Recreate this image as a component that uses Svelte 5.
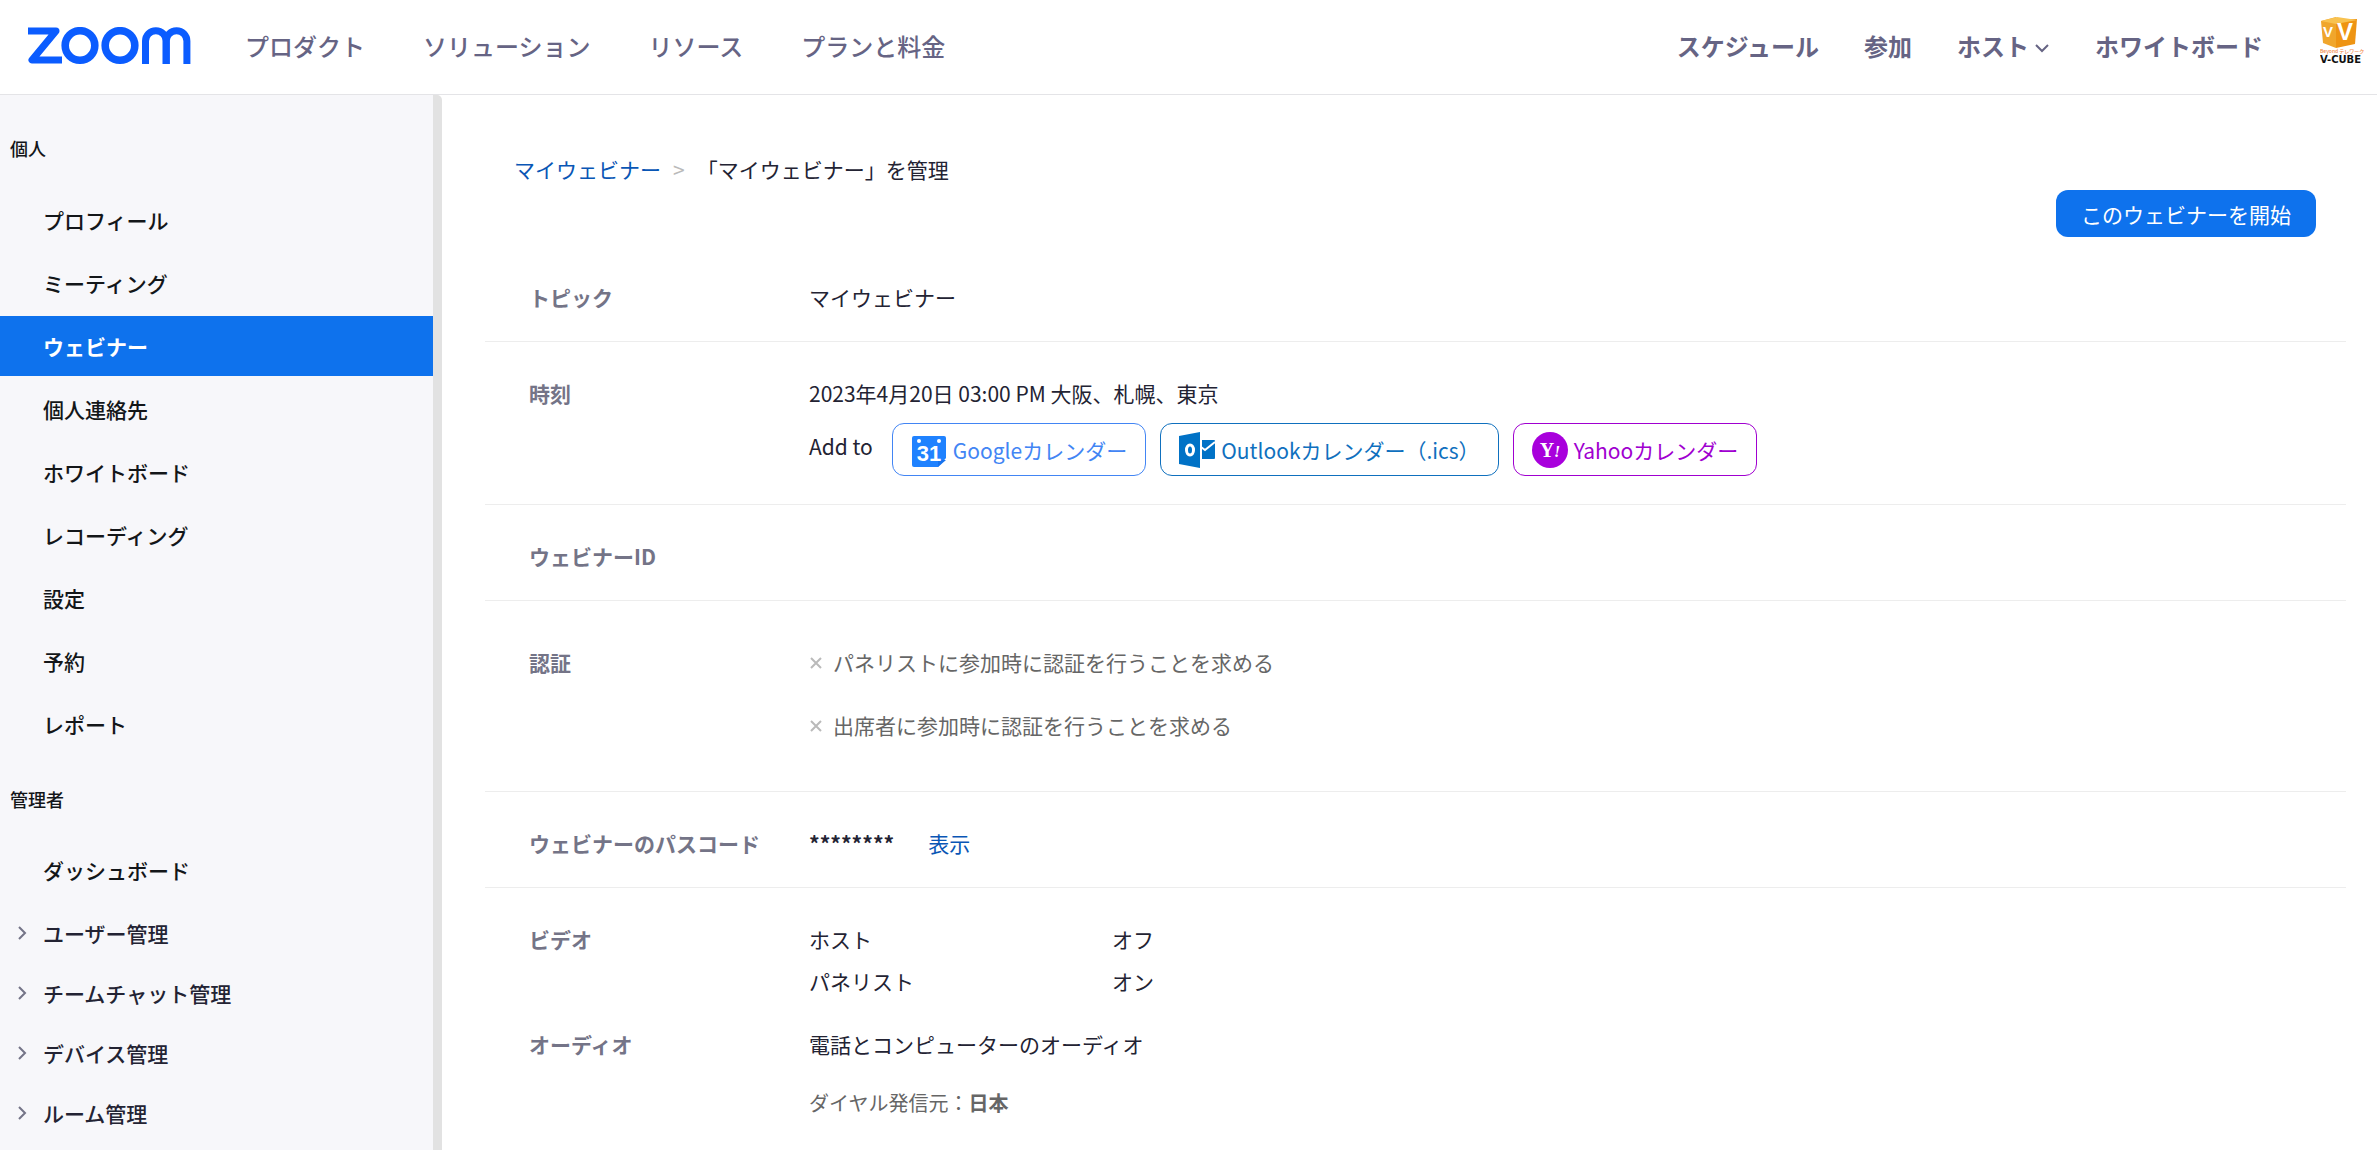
<script lang="ts">
  const products = ["プロダクト", "ソリューション", "リソース", "プランと料金"];

  const personal = [
    "プロフィール",
    "ミーティング",
    "ウェビナー",
    "個人連絡先",
    "ホワイトボード",
    "レコーディング",
    "設定",
    "予約",
    "レポート",
  ];
  const admin = ["ユーザー管理", "チームチャット管理", "デバイス管理", "ルーム管理"];

  const authOptions = [
    "パネリストに参加時に認証を行うことを求める",
    "出席者に参加時に認証を行うことを求める",
  ];

  let current = $state("ウェビナー");
  let passcodeShown = $state(false);
</script>

<div class="page">
  <header>
    <a class="logo" href="#home" aria-label="zoom">
      <svg width="164" height="38" viewBox="0 0 164 38" fill="none" stroke="#0b5cff" stroke-width="7">
        <polyline points="1,4 29,4 5,33 35,33" stroke-linejoin="round" />
        <circle cx="53" cy="18.5" r="14.8" stroke-width="7.6" />
        <circle cx="93" cy="18.5" r="14.8" stroke-width="7.6" />
        <svg x="114" y="0" width="50" height="37">
          <rect x="4.5" y="3.8" width="20.7" height="60" rx="10.3" />
          <rect x="25.2" y="3.8" width="20.7" height="60" rx="10.3" />
        </svg>
      </svg>
    </a>
    <nav class="products">
      {#each products as name}
        <a href="#{name}">{name}</a>
      {/each}
    </nav>
    <nav class="actions">
      <a href="#schedule">スケジュール</a>
      <a href="#join">参加</a>
      <a class="host" href="#host">
        ホスト
        <svg width="16" height="18" viewBox="0 0 16 18">
          <path d="M2 8l6 6 6-6" fill="none" stroke="#666484" stroke-width="2" />
        </svg>
      </a>
      <a href="#whiteboard">ホワイトボード</a>
    </nav>
    <a class="avatar" href="#account" aria-label="V-CUBE">
      <svg width="46" height="60" viewBox="0 0 46 60">
        <path d="M1 5L16 1v31L3 27z" fill="#f0a62c" />
        <path d="M16 4l21-1-2 25-19 4z" fill="#ee9413" />
        <path d="M1 5L17 1l20 3-21 4z" fill="#f8c250" />
        <g fill="#fff" font-family="Liberation Sans, sans-serif" font-weight="700">
          <text x="3" y="21" font-size="15">V</text>
          <text x="17" y="24" font-size="24">V</text>
        </g>
        <text x="0" y="37" font-size="5" fill="#f08a4a">Beyond テレワーク</text>
        <text x="0" y="47" font-family="DejaVu Sans, sans-serif" font-size="10" font-weight="700" fill="#111">V-CUBE</text>
      </svg>
    </a>
  </header>

  <div class="body">
    <aside>
      <h2>個人</h2>
      <ul>
        {#each personal as name}
          <li>
            <a href="#{name}" class:active={current === name} onclick={() => (current = name)}>{name}</a>
          </li>
        {/each}
      </ul>
      <h2 class="admin">管理者</h2>
      <ul>
        <li><a href="#dashboard">ダッシュボード</a></li>
      </ul>
      <ul class="groups">
        {#each admin as name}
          <li>
            <button>
              <svg width="10" height="14" viewBox="0 0 10 14">
                <path d="M2 1l6 6-6 6" fill="none" stroke="#747487" stroke-width="2" />
              </svg>
              {name}
            </button>
          </li>
        {/each}
      </ul>
    </aside>

    <main>
      <div class="breadcrumb">
        <a href="#webinars">マイウェビナー</a>
        <span class="sep">&gt;</span>
        <span>「マイウェビナー」を管理</span>
      </div>
      <div class="toolbar">
        <button class="start">このウェビナーを開始</button>
      </div>

      <dl>
        <div class="row">
          <dt>トピック</dt>
          <dd>マイウェビナー</dd>
        </div>
        <div class="row time">
          <dt>時刻</dt>
          <dd>
            <p>2023年4月20日 03:00 PM 大阪、札幌、東京</p>
            <div class="calendars">
              <span class="add">Add to</span>
              <a class="google" href="#google">
                <svg width="36" height="36" viewBox="0 0 36 36">
                  <path d="M3 4h30a2 2 0 0 1 2 2v20l-8 9H3a2 2 0 0 1-2-2V6a2 2 0 0 1 2-2z" fill="#1f82ff" />
                  <path d="M27 35v-7h8z" fill="#1673ee" />
                  <circle cx="8" cy="9" r="2" fill="#fff" />
                  <circle cx="28" cy="9" r="2" fill="#fff" />
                  <text x="18" y="29" font-family="Liberation Sans, sans-serif" font-size="22" font-weight="700" text-anchor="middle" fill="#fff">31</text>
                </svg>
                Googleカレンダー
              </a>
              <a class="outlook" href="#outlook">
                <svg width="36" height="36" viewBox="0 0 36 36">
                  <path d="M0 4l21-4v36L0 32z" fill="#0072c6" />
                  <path d="M23 8h12a1 1 0 0 1 1 1v17a1 1 0 0 1-1 1H23z" fill="#0072c6" />
                  <path d="M22 15l4 3 10-8" fill="none" stroke="#fff" stroke-width="2" />
                  <ellipse cx="11" cy="18" rx="3.5" ry="5" fill="none" stroke="#fff" stroke-width="3" />
                </svg>
                Outlookカレンダー（.ics）
              </a>
              <a class="yahoo" href="#yahoo">
                <svg width="36" height="36" viewBox="0 0 36 36">
                  <circle cx="18" cy="18" r="18" fill="#a800dc" />
                  <text x="18" y="25" font-family="Liberation Serif, serif" font-size="20" font-weight="700" text-anchor="middle" fill="#fff">Y<tspan font-size="16" font-style="italic">!</tspan></text>
                </svg>
                Yahooカレンダー
              </a>
            </div>
          </dd>
        </div>
        <div class="row">
          <dt>ウェビナーID</dt>
          <dd></dd>
        </div>
        <div class="row auth">
          <dt>認証</dt>
          <dd>
            {#each authOptions as option}
              <p>
                <svg width="14" height="16" viewBox="0 0 14 16">
                  <path d="M2 4l10 10M12 4L2 14" stroke="#bababa" stroke-width="2" />
                </svg>
                {option}
              </p>
            {/each}
          </dd>
        </div>
        <div class="row">
          <dt>ウェビナーのパスコード</dt>
          <dd class="passcode">
            <b>********</b>
            <button onclick={() => (passcodeShown = !passcodeShown)}>{passcodeShown ? "非表示" : "表示"}</button>
          </dd>
        </div>
        <div class="row video">
          <dt>ビデオ</dt>
          <dd>
            <span>ホスト</span><span>オフ</span>
            <span>パネリスト</span><span>オン</span>
          </dd>
        </div>
        <div class="row audio">
          <dt>オーディオ</dt>
          <dd>
            <p>電話とコンピューターのオーディオ</p>
            <p class="dial">ダイヤル発信元：<b>日本</b></p>
          </dd>
        </div>
      </dl>
    </main>
  </div>
</div>

<style>
  :global(body) {
    background: #fff;
    color: #232333;
    font-family: "Noto Sans CJK JP", sans-serif;
    font-size: 21px;
    line-height: 30px;
  }

  .page {
    display: flex;
    flex-direction: column;
    min-height: 100vh;
  }

  a {
    color: inherit;
    text-decoration: none;
  }

  button {
    font: inherit;
    color: inherit;
    background: none;
    border: 0;
    padding: 0;
    cursor: pointer;
  }

  h2,
  p,
  ul,
  dl,
  dd {
    margin: 0;
    padding: 0;
  }

  header {
    display: flex;
    align-items: center;
    box-sizing: border-box;
    height: 95px;
    padding: 0 11px 2px 27px;
    border-bottom: 1px solid #e4e4e7;
    color: #666484;
    font-size: 24px;
    font-weight: 500;
  }

  .logo svg,
  .avatar svg {
    display: block;
  }

  .products {
    display: flex;
    gap: 58px;
    margin-left: 54px;
  }

  .actions {
    display: flex;
    gap: 45px;
    margin-left: auto;
    font-weight: 700;
  }

  .host {
    display: flex;
    align-items: center;
    gap: 5px;
  }

  .avatar {
    margin-left: 57px;
  }

  .body {
    display: flex;
    flex: 1;
  }

  aside {
    flex: none;
    box-sizing: border-box;
    width: 442px;
    background: #f7f7fa;
    border-right: 9px solid #e2e2e2;
    border-top-right-radius: 5px;
    color: #131619;
    font-weight: 500;
  }

  h2 {
    padding: 38px 10px 27px;
    font-size: 18px;
    font-weight: 500;
    line-height: 30px;
  }

  h2.admin {
    padding: 27px 10px 26px;
  }

  ul {
    list-style: none;
  }

  li a,
  li button {
    display: flex;
    align-items: center;
    box-sizing: border-box;
    width: 100%;
    height: 60px;
    margin-bottom: 3px;
    padding-left: 43px;
  }

  li a.active {
    background: #0e72ed;
    color: #fff;
    font-weight: 700;
  }

  .groups button {
    gap: 16px;
    margin: 0;
    padding-left: 17px;
    color: #232333;
  }

  main {
    flex: 1;
    min-width: 0;
    padding: 59px 31px 0 43px;
  }

  .breadcrumb {
    display: flex;
    gap: 12px;
    padding-left: 29px;
  }

  .breadcrumb a,
  .passcode button {
    color: #0956b5;
  }

  .sep {
    color: #bababa;
  }

  .toolbar {
    display: flex;
    justify-content: flex-end;
    padding: 6px 30px 9px 0;
  }

  .start {
    height: 47px;
    padding: 0 25px;
    border-radius: 12px;
    background: #0e72ed;
    color: #fff;
  }

  .row {
    display: flex;
    padding: 36px 0 29px 44px;
    border-bottom: 1px solid #ededed;
  }

  dt {
    flex: none;
    width: 280px;
    color: #747487;
    font-weight: 700;
  }

  dd {
    flex: 1;
    min-height: 30px;
  }

  .time {
    padding-bottom: 28px;
  }

  .calendars {
    display: flex;
    gap: 14px;
    margin-top: 15px;
  }

  .add {
    margin: 8px 5px 0 0;
  }

  .calendars a {
    display: flex;
    align-items: center;
    gap: 6px;
    box-sizing: border-box;
    height: 53px;
    padding: 0 18px;
    border: 1px solid;
    border-radius: 12px;
    line-height: 28px;
  }

  .google {
    color: #4285f4;
  }

  .outlook {
    color: #0f70be;
  }

  .yahoo {
    color: #a000d0;
  }

  .auth {
    padding-top: 46px;
    padding-bottom: 18px;
  }

  .auth p {
    display: flex;
    align-items: center;
    gap: 10px;
    margin-bottom: 33px;
    color: #666;
  }

  .passcode {
    display: flex;
    gap: 34px;
  }

  .video {
    padding-bottom: 0;
    border: 0;
  }

  .video dd {
    display: grid;
    grid-template-columns: 303px 1fr;
    row-gap: 12px;
  }

  .audio {
    padding: 33px 0 0 44px;
    border: 0;
  }

  .dial {
    margin-top: 29px;
    color: #666;
    font-size: 20px;
  }
</style>
